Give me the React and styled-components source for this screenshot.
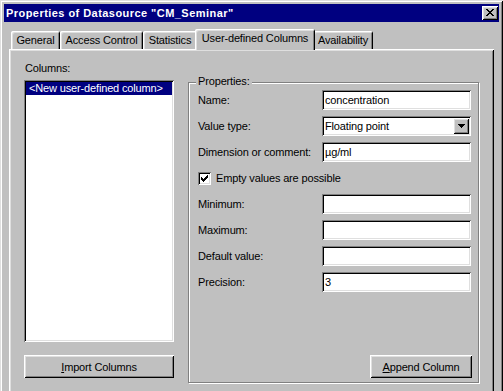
import React from "react";
import styled, { createGlobalStyle } from "styled-components";

const GlobalStyle = createGlobalStyle`
  html, body {
    margin: 0;
    padding: 0;
    overflow: hidden;
    background: #c0c0c0;
  }
  body {
    font-family: "Liberation Sans", Arial, sans-serif;
    font-size: 11px;
    color: #000;
  }
  #root {
    width: 503px;
    height: 391px;
    overflow: hidden;
  }
`;

const raised = `
  box-shadow: inset 1px 1px #fff, inset -1px -1px #000, inset 2px 2px #dfdfdf,
    inset -2px -2px #808080;
`;

const sunken = `
  box-shadow: inset 1px 1px #808080, inset -1px -1px #fff, inset 2px 2px #000,
    inset -2px -2px #dfdfdf;
`;

const Window = styled.div`
  width: 503px;
  height: 430px;
  box-sizing: border-box;
  padding: 4px;
  background: #c0c0c0;
  box-shadow: inset 1px 1px #dfdfdf, inset -1px -1px #000, inset 2px 2px #fff,
    inset -2px -2px #808080;
  display: flex;
  flex-direction: column;
`;

const TitleBar = styled.div`
  height: 18px;
  background: #000080;
  display: flex;
  align-items: center;
  justify-content: space-between;
  padding: 0 1px 0 2px;
`;

const Title = styled.span`
  color: #fff;
  font-weight: bold;
  font-size: 11px;
  letter-spacing: 0.45px;
`;

const CloseButton = styled.div`
  width: 16px;
  height: 14px;
  background: #c0c0c0;
  ${raised}
  display: flex;
  align-items: center;
  justify-content: center;
  padding-bottom: 1px;
  box-sizing: border-box;
`;

const Body = styled.div`
  padding: 7px 5px 0;
  display: flex;
  flex-direction: column;
`;

const TabStrip = styled.div`
  height: 20px;
  display: flex;
  align-items: flex-end;
  padding-left: 2px;
  position: relative;
  z-index: 1;
`;

const Tab = styled.div`
  box-sizing: border-box;
  width: ${(p) => p.$w + (p.$active ? 4 : 0)}px;
  height: ${(p) => (p.$active ? 21 : 18)}px;
  margin: 0 ${(p) => (p.$active ? -2 : 0)}px ${(p) => (p.$active ? -1 : 0)}px;
  background: #c0c0c0;
  border-radius: 2px 2px 0 0;
  box-shadow: inset 1px 1px #fff, inset -1px 0 #000, inset 2px 2px #dfdfdf,
    inset -2px 0 #808080;
  text-align: center;
  line-height: 16px;
  padding-top: 1px;
  letter-spacing: -0.15px;
  white-space: nowrap;
  position: relative;
  z-index: ${(p) => (p.$active ? 2 : 1)};
`;

const Panel = styled.div`
  height: 360px;
  box-sizing: border-box;
  padding: 13px 12px 0 15px;
  box-shadow: inset 1px 1px #fff, inset -1px -1px #000, inset 2px 2px #dfdfdf,
    inset -2px -2px #808080;
  display: flex;
  align-items: flex-start;
`;

const LeftColumn = styled.div`
  width: 150px;
  display: flex;
  flex-direction: column;
`;

const Label = styled.div`
  line-height: 13px;
  height: 13px;
  letter-spacing: -0.15px;
  white-space: nowrap;
  padding-left: ${(p) => p.$indent || 0}px;
`;

const ListBox = styled.div`
  margin-top: 5px;
  height: 262px;
  background: #fff;
  box-sizing: border-box;
  padding: 2px;
  ${sunken}
`;

const ListItem = styled.div`
  height: 13px;
  line-height: 13px;
  padding-left: 3px;
  background: ${(p) => (p.$selected ? "#000080" : "transparent")};
  color: ${(p) => (p.$selected ? "#fff" : "#000")};
  letter-spacing: -0.15px;
  white-space: nowrap;
`;

const Button = styled.div`
  box-sizing: border-box;
  width: ${(p) => p.$w}px;
  height: 23px;
  margin-top: ${(p) => p.$mt || 0}px;
  background: #c0c0c0;
  ${raised}
  display: flex;
  align-items: center;
  justify-content: center;
  letter-spacing: -0.15px;
  white-space: nowrap;
  & u {
    text-decoration: underline;
    text-underline-offset: 1px;
  }
`;

const Group = styled.div`
  position: relative;
  margin: 20px 0 0 14px;
  width: 291px;
  height: 301px;
  box-sizing: border-box;
  border: 1px solid #808080;
  box-shadow: inset 1px 1px #fff, 1px 1px #fff;
  padding: 7px 6px 4px 9px;
  display: flex;
  flex-direction: column;
`;

const Legend = styled.span`
  position: absolute;
  left: 7px;
  top: -8px;
  padding: 0 2px;
  background: #c0c0c0;
  line-height: 13px;
  letter-spacing: -0.15px;
`;

const FieldGrid = styled.div`
  display: grid;
  grid-template-columns: 124px 149px;
  grid-auto-rows: 20px;
  row-gap: 6px;
  align-items: center;
`;

const Input = styled.div`
  box-sizing: border-box;
  height: 20px;
  background: #fff;
  ${sunken}
  padding: 0 3px;
  line-height: 20px;
  letter-spacing: -0.15px;
  white-space: nowrap;
  display: flex;
  align-items: center;
  justify-content: space-between;
`;

const DropButton = styled.div`
  width: 16px;
  height: 16px;
  margin-right: -1px;
  background: #c0c0c0;
  ${raised}
  display: flex;
  align-items: center;
  justify-content: center;
`;

const CheckRow = styled.label`
  grid-column: 1 / 3;
  display: flex;
  align-items: center;
  gap: 5px;
  letter-spacing: -0.15px;
`;

const CheckBox = styled.div`
  width: 13px;
  height: 13px;
  box-sizing: border-box;
  background: #fff;
  ${sunken}
  display: flex;
  align-items: center;
  justify-content: center;
`;

const Footer = styled.div`
  margin-top: auto;
  display: flex;
  justify-content: flex-end;
`;

function CloseGlyph() {
  return (
    <svg width="8" height="7" viewBox="0 0 8 7" shapeRendering="crispEdges">
      <path
        fill="#000"
        d="M0 0h2v1h-2zM6 0h2v1h-2zM1 1h2v1h-2zM5 1h2v1h-2zM2 2h4v1h-4zM3 3h2v1h-2zM2 4h4v1h-4zM1 5h2v1h-2zM5 5h2v1h-2zM0 6h2v1h-2zM6 6h2v1h-2z"
      />
    </svg>
  );
}

function DownArrow() {
  return (
    <svg width="7" height="4" viewBox="0 0 7 4" shapeRendering="crispEdges">
      <path fill="#000" d="M0 0h7v1h-7zM1 1h5v1h-5zM2 2h3v1h-3zM3 3h1v1h-1z" />
    </svg>
  );
}

function CheckMark() {
  return (
    <svg width="7" height="7" viewBox="0 0 7 7" shapeRendering="crispEdges">
      <path
        fill="#000"
        d="M6 0h1v1h-1zM5 1h2v1h-2zM0 2h1v1h-1zM4 2h3v1h-3zM0 3h2v1h-2zM3 3h3v1h-3zM0 4h5v1h-5zM1 5h3v1h-3zM2 6h1v1h-1z"
      />
    </svg>
  );
}

const tabs = [
  { label: "General", w: 49 },
  { label: "Access Control", w: 83 },
  { label: "Statistics", w: 54 },
  { label: "User-defined Columns", w: 116, active: true },
  { label: "Availability", w: 60 },
];

const fieldsTop = [
  { label: "Name:", value: "concentration" },
  { label: "Value type:", value: "Floating point", select: true },
  { label: "Dimension or comment:", value: "µg/ml" },
];

const fieldsBottom = [
  { label: "Minimum:", value: "" },
  { label: "Maximum:", value: "" },
  { label: "Default value:", value: "" },
  { label: "Precision:", value: "3" },
];

function Field({ label, value, select }) {
  return (
    <>
      <Label>{label}</Label>
      <Input>
        <span>{value}</span>
        {select && (
          <DropButton>
            <DownArrow />
          </DropButton>
        )}
      </Input>
    </>
  );
}

export default function App() {
  return (
    <>
      <GlobalStyle />
      <Window>
        <TitleBar>
          <Title>Properties of Datasource "CM_Seminar"</Title>
          <CloseButton>
            <CloseGlyph />
          </CloseButton>
        </TitleBar>
        <Body>
          <TabStrip>
            {tabs.map((t) => (
              <Tab key={t.label} $w={t.w} $active={t.active}>
                {t.label}
              </Tab>
            ))}
          </TabStrip>
          <Panel>
            <LeftColumn>
              <Label $indent={1}>Columns:</Label>
              <ListBox>
                <ListItem $selected>&lt;New user-defined column&gt;</ListItem>
              </ListBox>
              <Button $w={150} $mt={13}>
                <span>
                  <u>I</u>mport Columns
                </span>
              </Button>
            </LeftColumn>
            <Group>
              <Legend>Properties:</Legend>
              <FieldGrid>
                {fieldsTop.map((f) => (
                  <Field key={f.label} {...f} />
                ))}
                <CheckRow>
                  <CheckBox>
                    <CheckMark />
                  </CheckBox>
                  Empty values are possible
                </CheckRow>
                {fieldsBottom.map((f) => (
                  <Field key={f.label} {...f} />
                ))}
              </FieldGrid>
              <Footer>
                <Button $w={102}>
                  <span>
                    <u>A</u>ppend Column
                  </span>
                </Button>
              </Footer>
            </Group>
          </Panel>
        </Body>
      </Window>
    </>
  );
}
